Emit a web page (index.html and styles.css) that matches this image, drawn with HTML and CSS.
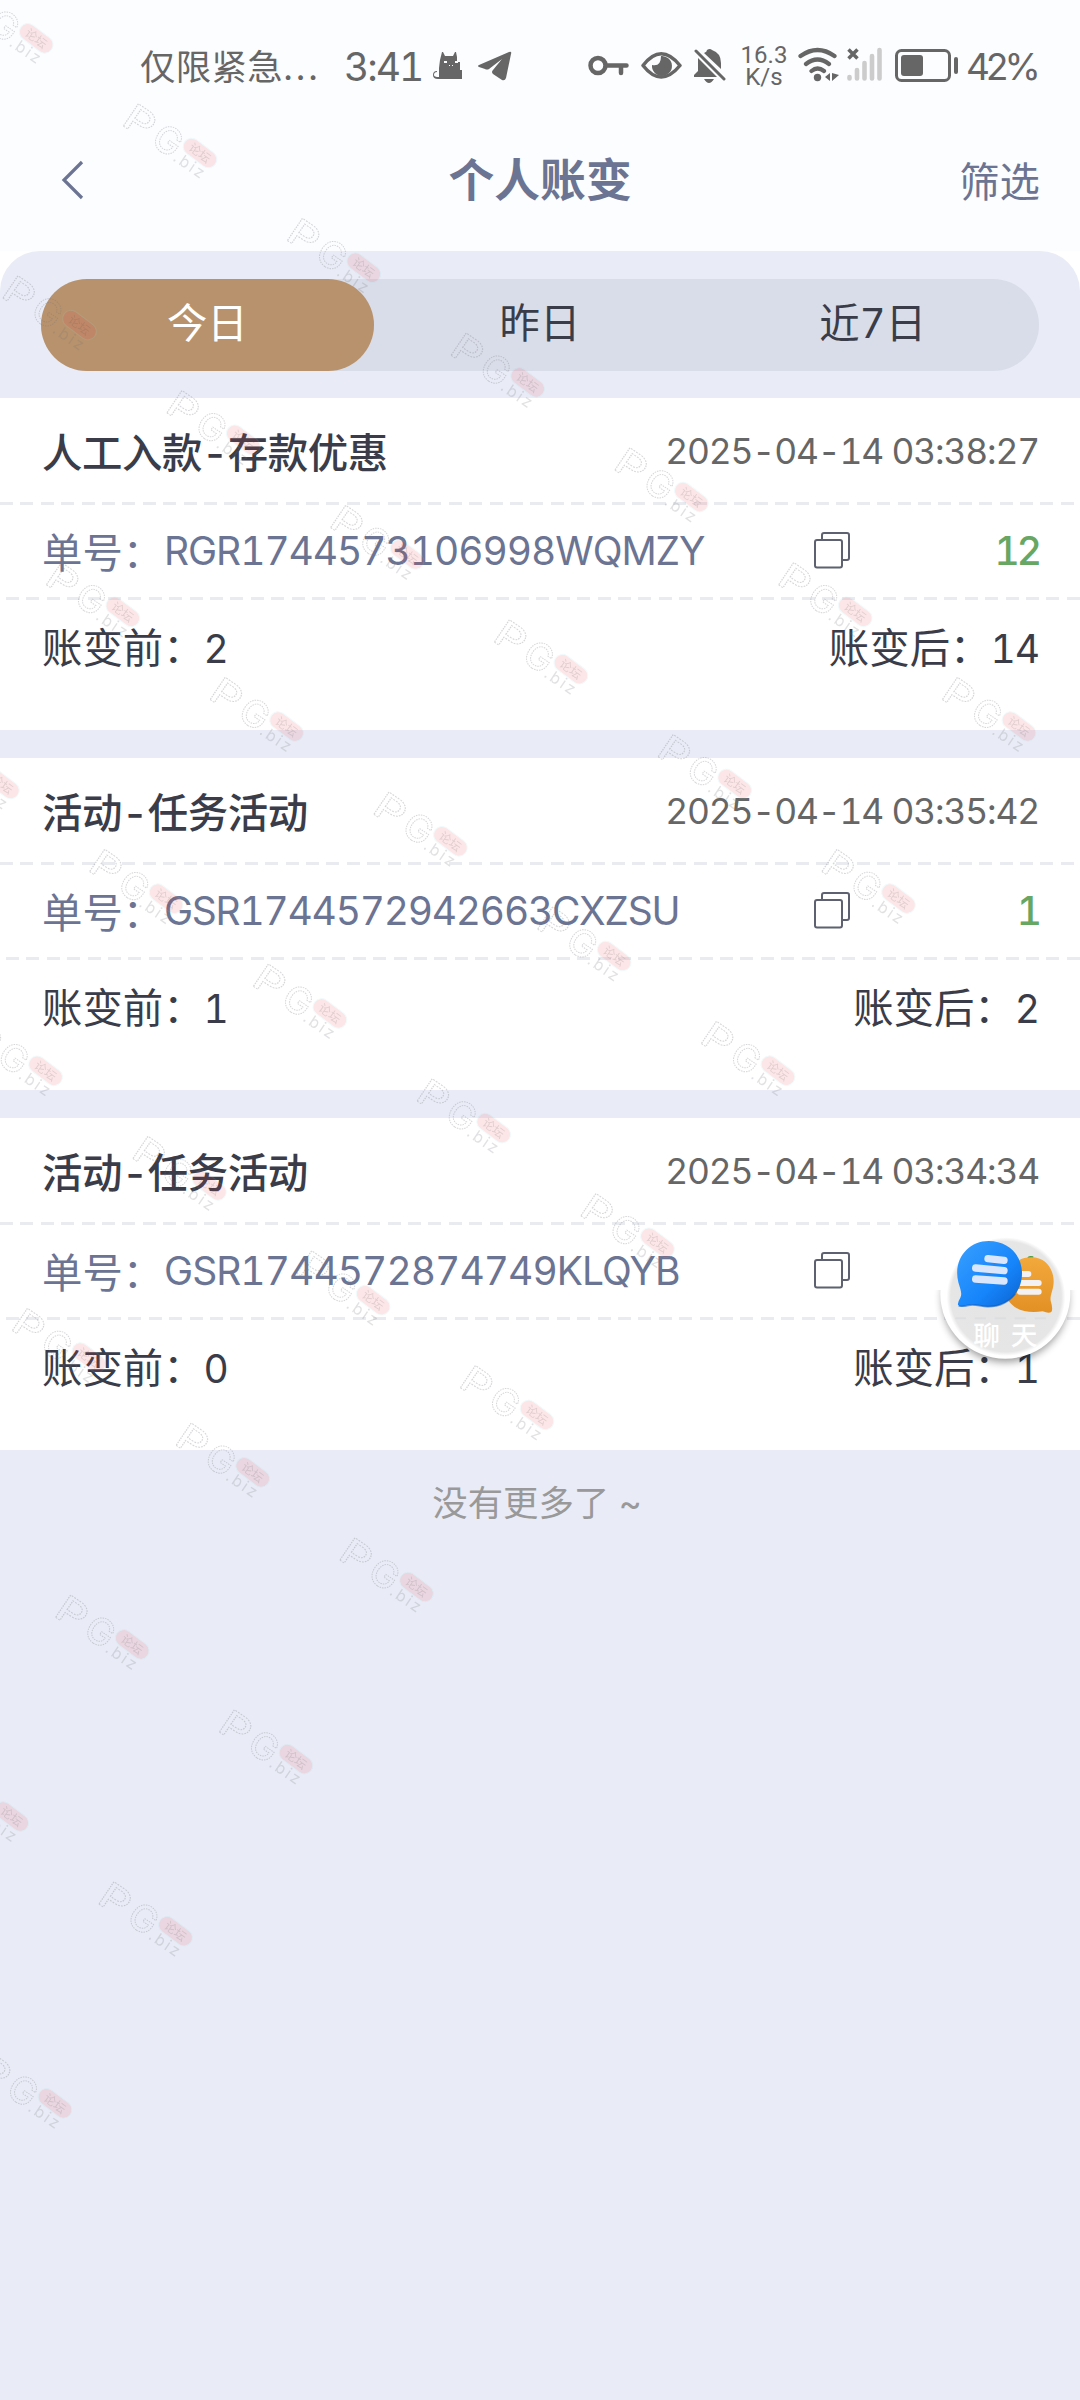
FILE: index.html
```html
<!DOCTYPE html>
<html lang="zh-CN">
<head>
<meta charset="utf-8">
<title>个人账变</title>
<link rel="stylesheet" href="styles.css">
</head>
<body>
<div class="screen">
  <div class="status">
    <span class="carrier">仅限紧急<span class="dots">...</span></span>
    <span class="clock">3:41</span>
    <svg class="cat" width="30" height="30" viewBox="0 0 30 30"><path fill="#666" d="M9 1h1l2 4h8l2-4h1l1 5v5h3v8h2v9H5q-5 0-5-4 0-4 4-4v1q-3 0-3 3 0 2 5 2V17l1-8z"/><path fill="#fcfdff" d="M11 10h3v2h-3zM22 10h3v2h-3zM16 14h1v1h-1zM19 14h1v1h-1z"/></svg>
    <svg class="plane" width="34" height="30" viewBox="0 0 34 30"><path fill="#666" d="M1 14 31 1q3-1 2 2l-5 24q-1 3-4 2l-9-6q-2-2 0-4l9-11-13 10q-2 1-4 0l-6-2q-2-1 0-2z"/></svg>
    <svg class="key" width="41" height="40" viewBox="588 46 41 40"><g fill="none" stroke="#666" stroke-width="4.5"><circle cx="598" cy="65.500" r="7.500"/><path stroke-linecap="round" d="M607 65.500h19.500M621 66v7"/></g></svg>
    <svg class="eye" width="41" height="40" viewBox="641 46 41 40"><path fill="none" stroke="#666" stroke-width="3.500" stroke-linejoin="round" d="M643 65.500q18-23.500 37 0-19 23-37 0z"/><path fill="#666" d="M661 56a10 10 0 1 1-9 9q9 2 9-9z"/></svg>
    <svg class="bell" width="33" height="40" viewBox="694 46 33 40"><path fill="#666" d="m698 58 19 19h-23v-2l4-4zM704 53q3-1 3-3 3-2 5 0 9 3 9 13v6zM704 79h10q-5 8-10 0z"/><path stroke="#666" stroke-width="3" stroke-linecap="round" d="m696 51 28 28"/></svg>
    <span class="net"><span>16.3</span><span>K/s</span></span>
    <svg class="wifi" width="42" height="40" viewBox="798 46 42 40"><g fill="none" stroke="#666" stroke-width="4.200" stroke-linecap="round"><path d="M800.500 56q17-12 34 0M806 64q11.500-9 23 0M811.500 71q6-5 12.500 0"/></g><circle cx="817.500" cy="77.500" r="3.700" fill="#666"/><path fill="#666" d="m825 77 5-4v8zM832 73l7 2-7 6z"/></svg>
    <svg class="signal" width="36" height="40" viewBox="847 46 36 40"><g stroke="#ccc" stroke-width="4.600" stroke-linecap="round"><path d="M849.500 77v1.500M857 70v8.500M864.500 63v15.500M872 56v22.500M879.500 50v28.500"/></g><path stroke="#666" stroke-width="3.500" d="m848.500 49.500 9 9m0-9-9 9"/></svg>
    <svg class="battery" width="64" height="40" viewBox="895 46 64 40"><rect x="896.500" y="50.500" width="53" height="30" rx="5" fill="none" stroke="#666" stroke-width="3"/><rect x="901" y="55" width="22" height="21" rx="3" fill="#666"/><rect x="954" y="57" width="4" height="17" rx="2" fill="#666"/></svg>
    <span class="percent">42%</span>
  </div>

  <header class="nav">
    <svg class="back" width="24" height="40" viewBox="0 0 24 40"><path fill="none" stroke="#6b7492" stroke-width="3.200" d="M21 2 3 20l18 18"/></svg>
    <h1>个人账变</h1>
    <span class="filter">筛选</span>
  </header>

  <main class="panel">
    <div class="tabs"><span class="tab active">今日</span><span class="tab">昨日</span><span class="tab">近7日</span></div>

    <section class="card">
      <div class="row head"><b>人工入款-存款优惠</b><time>2025-04-14 03:38:27</time></div>
      <div class="dash"></div>
      <div class="row order"><span class="label">单号：</span><span class="num n1">RGR1744573106998WQMZY</span><svg class="copy" width="36" height="37" viewBox="0 0 36 37"><g fill="none" stroke="#5d6170" stroke-width="2"><path d="M8 7V3q0-2 2-2h23q2 0 2 2v23q0 2-2 2h-4"/><rect x="1" y="8" width="27" height="27.500" rx="2"/></g></svg><span class="amount">12</span></div>
      <div class="dash second"></div>
      <div class="row change"><span>账变前：<i>2</i></span><span>账变后：<i>14</i></span></div>
    </section>

    <section class="card">
      <div class="row head"><b>活动-任务活动</b><time>2025-04-14 03:35:42</time></div>
      <div class="dash"></div>
      <div class="row order"><span class="label">单号：</span><span class="num n2">GSR1744572942663CXZSU</span><svg class="copy" width="36" height="37" viewBox="0 0 36 37"><g fill="none" stroke="#5d6170" stroke-width="2"><path d="M8 7V3q0-2 2-2h23q2 0 2 2v23q0 2-2 2h-4"/><rect x="1" y="8" width="27" height="27.500" rx="2"/></g></svg><span class="amount">1</span></div>
      <div class="dash second"></div>
      <div class="row change"><span>账变前：<i>1</i></span><span>账变后：<i>2</i></span></div>
    </section>

    <section class="card">
      <div class="row head"><b>活动-任务活动</b><time>2025-04-14 03:34:34</time></div>
      <div class="dash"></div>
      <div class="row order"><span class="label">单号：</span><span class="num n3">GSR1744572874749KLQYB</span><svg class="copy" width="36" height="37" viewBox="0 0 36 37"><g fill="none" stroke="#5d6170" stroke-width="2"><path d="M8 7V3q0-2 2-2h23q2 0 2 2v23q0 2-2 2h-4"/><rect x="1" y="8" width="27" height="27.500" rx="2"/></g></svg></div>
      <div class="dash second"></div>
      <div class="row change"><span>账变前：<i>0</i></span><span>账变后：<i>1</i></span></div>
    </section>

    <p class="end">没有更多了 ~</p>
  </main>

  <svg class="chat" width="180" height="200" viewBox="0 0 540 600">
    <defs>
      <linearGradient id="blue" x1="0" y1="0" x2="1" y2="1"><stop offset="0" stop-color="#3aa0ff"/><stop offset=".6" stop-color="#1685fb"/><stop offset="1" stop-color="#0b62cf"/></linearGradient>
      <linearGradient id="gold" x1="0" y1="0" x2="0" y2="1"><stop offset="0" stop-color="#f3a93c"/><stop offset="1" stop-color="#e29024"/></linearGradient>
      <radialGradient id="disc"><stop offset="0" stop-color="#e4e4e4"/><stop offset=".93" stop-color="#e6e6e6"/><stop offset="1" stop-color="#fff"/></radialGradient>
      <filter id="soft" x="-20%" y="-20%" width="140%" height="150%"><feGaussianBlur stdDeviation="12"/></filter>
      <clipPath id="lower"><path d="M0 270h540v330H0z"/></clipPath>
    </defs>
    <circle cx="316" cy="297" r="188" fill="#000" opacity=".42" filter="url(#soft)" clip-path="url(#lower)"/>
    <circle cx="316" cy="281" r="195" fill="#fff"/>
    <circle cx="318" cy="290" r="178" fill="url(#disc)"/>
    <path stroke="#d9dcde" stroke-width="6" d="M166 355h32m26 0h34m26 0h34m26 0h34m26 0h34" opacity=".7"/>
    <path fill="#4d9a3c" d="M382 174q2-9 18-5v9z"/>
    <path fill="url(#gold)" d="M395 172c44 0 66 38 66 72 0 26-12 42-9 58q8 26 2 34-8 5-26-2c-46 8-92-4-108-42l35-110q16-10 40-10z"/>
    <g stroke="#f4f1f5" stroke-width="18" stroke-linecap="round"><path d="M366 222h19M362 249h54M360 275h56"/></g>
    <path fill="url(#blue)" d="M266 123c58 0 100 42 100 96 0 66-50 102-104 101-24-1-40-9-60-4q-20 7-28-1-2-7 7-22c6-12 1-22-6-46-17-69 30-124 91-124z"/>
    <path fill="none" stroke="#0a5cc6" stroke-width="5" opacity=".6" d="M176 317q10 4 28-1c20-5 36 3 60 4 34 0 62-14 82-38"/>
    <g stroke="#d9e6fc" stroke-width="22" stroke-linecap="round"><path d="m264 176 48 5M227 204l85 8M227 237l85 6"/></g>
    <text x="220" y="434" class="chat-text">聊</text><text x="332" y="434" class="chat-text">天</text>
  </svg>

  <svg class="marks" width="1080" height="2400" viewBox="0 0 1080 2400">
    <defs>
      <g id="mark">
        <g transform="translate(0 22) rotate(34)">
          <text class="m-out" x="-2" y="0" textLength="30" lengthAdjust="spacingAndGlyphs">P</text>
          <text class="m-out" x="33" y="0">G</text>
          <text class="m-biz" x="61" y="1" textLength="34">.biz</text>
        </g>
        <g transform="translate(78 50) rotate(37)">
          <rect x="-19" y="-8.500" width="38" height="17" rx="8.500" class="m-pill"/>
          <text x="-12" y="4.500" class="m-cn">论坛</text>
        </g>
      </g>
    </defs>
    <use href="#mark" x="-41.800" y="-11.700"/><use href="#mark" x="122" y="103"/><use href="#mark" x="285.800" y="217.700"/><use href="#mark" x="449.600" y="332.400"/><use href="#mark" x="613.400" y="447.100"/><use href="#mark" x="777.200" y="561.800"/><use href="#mark" x="941" y="676.500"/>
    <use href="#mark" x="1.500" y="275.100"/><use href="#mark" x="165.300" y="389.800"/><use href="#mark" x="329.100" y="504.500"/><use href="#mark" x="492.900" y="619.200"/><use href="#mark" x="656.700" y="733.900"/><use href="#mark" x="820.500" y="848.600"/>
    <use href="#mark" x="44.800" y="561.900"/><use href="#mark" x="208.600" y="676.600"/><use href="#mark" x="372.400" y="791.300"/><use href="#mark" x="536.200" y="906"/><use href="#mark" x="700" y="1020.700"/>
    <use href="#mark" x="-75.700" y="734"/><use href="#mark" x="88.100" y="848.700"/><use href="#mark" x="251.900" y="963.400"/><use href="#mark" x="415.700" y="1078.100"/><use href="#mark" x="579.500" y="1192.800"/>
    <use href="#mark" x="-32.400" y="1020.800"/><use href="#mark" x="131.400" y="1135.500"/><use href="#mark" x="295.200" y="1250.200"/><use href="#mark" x="459" y="1364.900"/>
    <use href="#mark" x="10.900" y="1307.600"/><use href="#mark" x="174.700" y="1422.300"/><use href="#mark" x="338.500" y="1537"/>
    <use href="#mark" x="54.200" y="1594.400"/><use href="#mark" x="218" y="1709.100"/>
    <use href="#mark" x="-66.300" y="1766.500"/><use href="#mark" x="97.500" y="1881.200"/>
    <use href="#mark" x="-23" y="2053.300"/>
  </svg>
</div>
</body>
</html>
```
FILE: styles.css
```css
* { box-sizing: border-box; }

body {
  margin: 0;
  background: #fff;
  font-family: Inter, "Noto Sans CJK SC", sans-serif;
  font-variant-numeric: tabular-nums;
  font-size: 40.4px;
  color: #3a3d49;
}

.screen {
  position: relative;
  width: 1080px;
  height: 2400px;
  overflow: hidden;
  display: flex;
  flex-direction: column;
  background: #fff;
}

.status {
  display: flex;
  align-items: center;
  height: 132px;
  padding-left: 140px;
  flex: none;
  color: #666;
  background: #fcfdff;
  white-space: nowrap;
}

.status svg { flex: none; }
.carrier { width: 204px; font-size: 35.4px; letter-spacing: .4px; padding-bottom: 4px; }
.dots { letter-spacing: 3px; }
.clock { width: 73px; font-size: 39px; letter-spacing: -2px; }
.cat { margin-left: 16px; }
.plane { margin-left: 15px; }
.key { margin-left: 76px; }
.eye { margin-left: 12px; }
.bell { margin-left: 12px; }
.net {
  width: 44px;
  margin-left: 15px;
  display: flex;
  flex-direction: column;
  align-items: center;
  font: 24px/22px Roboto, sans-serif;
}
.wifi { margin-left: 12px; }
.signal { margin-left: 7px; }
.battery { margin-left: 12px; }
.percent { margin-left: 7px; font-size: 37px; letter-spacing: -4.8px; }

.nav {
  display: flex;
  align-items: center;
  justify-content: space-between;
  height: 119px;
  padding: 0 40px 22px 61px;
  flex: none;
  color: #6b7492;
  background: #fcfdff;
}

.nav h1 {
  margin: 0 0 0 36px;
  font-size: 45.8px;
  font-weight: 700;
  line-height: 60px;
}

.filter { padding-bottom: 2px; }
.back { margin-bottom: 2px; }

.panel {
  flex: 1;
  padding-top: 28px;
  border-radius: 40px 40px 0 0;
  background: #e9ecf6;
}

.tabs {
  display: flex;
  height: 92px;
  margin: 0 41px 27px;
  border-radius: 46px;
  background: #d9dde9;
}

.tab {
  flex: 1;
  border-radius: 46px;
  text-align: center;
  line-height: 89px;
}

.tab.active { color: #fff; background: #b8926c; }

.card {
  height: 332px;
  margin-bottom: 28px;
  background: #fff;
}

.row {
  display: flex;
  align-items: center;
  justify-content: space-between;
  height: 92px;
  padding: 0 41px 2px 42px;
  white-space: nowrap;
}

.head { height: 104px; padding-top: 2px; }
.head b { font-weight: 500; letter-spacing: -.4px; }
.head time { padding-top: 3px; color: #666; font-size: 35.4px; letter-spacing: -1.15px; }

.dash {
  height: 3px;
  background: repeating-linear-gradient(90deg, #e9ebf0 0 13px, transparent 13px 20.4px);
}
.dash.second { background-position: 6px 0; }

.order { justify-content: flex-start; color: #6b7492; }
.label { width: 122px; }
.num { width: 650px; font-size: 39px; }
.n1 { letter-spacing: -1.05px; }
.n2 { letter-spacing: -1.25px; }
.n3 { letter-spacing: -.95px; }
.amount { margin-left: auto; color: #67a763; font-weight: 500; font-size: 39px; letter-spacing: -3px; }
.change i { font-style: normal; font-size: 39px; letter-spacing: -1px; }

.end {
  margin: 0 6px 0 0;
  padding-top: 2px;
  text-align: center;
  font-size: 35.4px;
  line-height: 48px;
  color: #999;
}

.chat { position: absolute; left: 900px; top: 1200px; }
.chat-text { fill: #fff; font-size: 80px; font-weight: 500; }

.marks { position: absolute; left: 0; top: 0; pointer-events: none; }
.m-out {
  font: 500 37px Inter, sans-serif;
  fill: none;
  stroke: #707078;
  stroke-width: 1;
  stroke-dasharray: 1.5 1;
  opacity: .28;
}
.m-biz { font: 16px Inter, sans-serif; fill: #707078; opacity: .2; }
.m-pill { fill: #f03c46; stroke: #8fe0e4; stroke-width: 1; opacity: .12; }
.m-cn { font-size: 12px; fill: #555; opacity: .16; }
```
